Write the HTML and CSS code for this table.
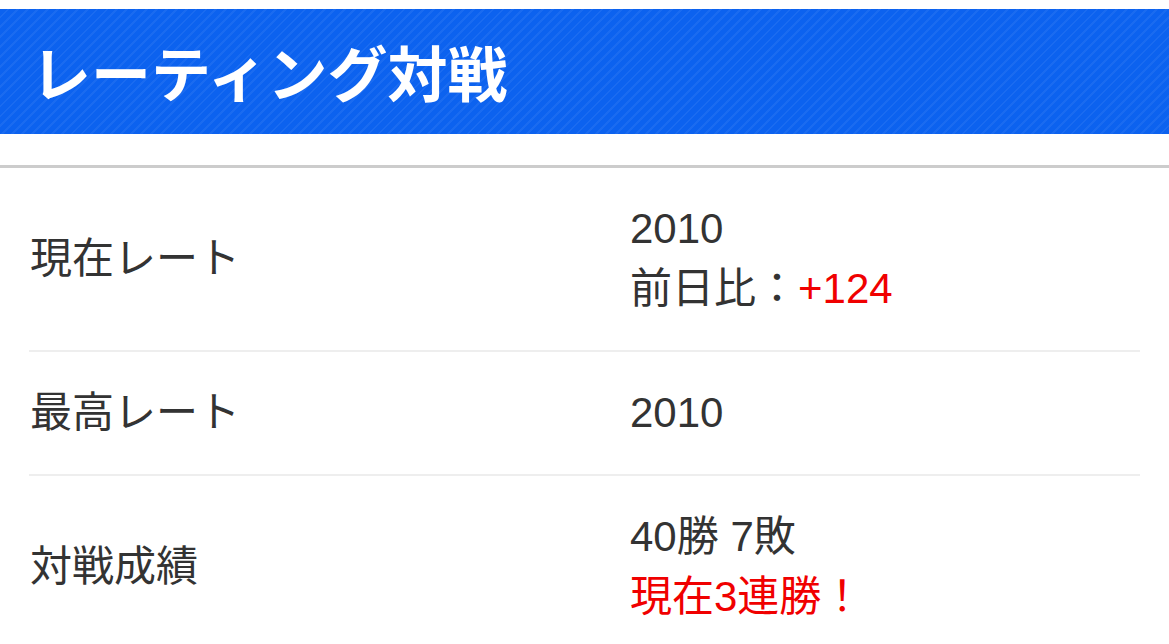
FILE: index.html
```html
<!DOCTYPE html>
<html lang="ja">
<head>
<meta charset="UTF-8">
<meta name="viewport" content="width=device-width, initial-scale=1.0">
<title>レーティング対戦</title>
<link rel="stylesheet" href="styles.css">
</head>
<body>
<div class="page">
  <div class="header">
    <h1>レーティング対戦</h1>
  </div>
  <div class="stats">
    <div class="row">
      <div class="label">現在レート</div>
      <div class="value">
        <div>2010</div>
        <div>前日比：<span class="red">+124</span></div>
      </div>
    </div>
    <div class="row">
      <div class="label">最高レート</div>
      <div class="value">
        <div>2010</div>
      </div>
    </div>
    <div class="row">
      <div class="label">対戦成績</div>
      <div class="value">
        <div>40勝 7敗</div>
        <div class="red">現在3連勝！</div>
      </div>
    </div>
  </div>
</div>
</body>
</html>
```

FILE: styles.css
```css
body {
    margin: 0;
    padding: 0;
    background-color: #fff;
    font-family: "Liberation Sans", "Noto Sans CJK JP", sans-serif;
    color: #333;
}

.page {
    padding-top: 9px;
}

.header {
    height: 125px;
    display: flex;
    align-items: center;
    padding: 0 31px;
    background-color: #0c62ef;
    /* thin diagonal stripes over the blue */
    background-image: repeating-linear-gradient(-45deg, rgba(255, 255, 255, 0) 0, rgba(255, 255, 255, 0) 5px, rgba(255, 255, 255, 0.06) 5px, rgba(255, 255, 255, 0.06) 7px);
}

.header h1 {
    margin: 0;
    color: #fff;
    font-family: "Noto Sans CJK JP", sans-serif;
    font-size: 60px;
    font-weight: bold;
    line-height: 1;
    padding-bottom: 2px;
}

.stats {
    margin-top: 31px;
    border-top: 3px solid #ccc;
    padding: 0 29px;
}

.row {
    display: grid;
    grid-template-columns: 600px 1fr;
    align-items: center;
    padding: 31px 0;
    border-bottom: 2px solid #eee;
    font-size: 42px;
    line-height: 60px;
}

.label {
    padding-left: 1px;
}

.value {
    padding-left: 1px;
}

.red {
    color: #f00000;
}
```
